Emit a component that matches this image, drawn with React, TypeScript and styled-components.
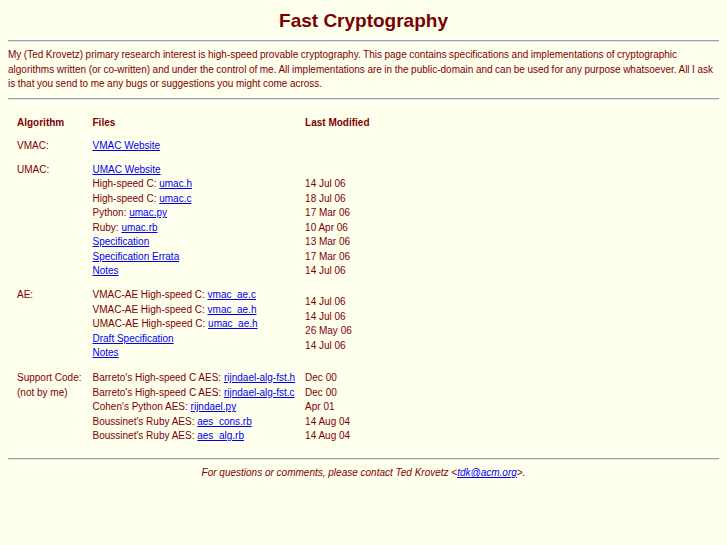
import styled, { createGlobalStyle } from "styled-components";

const GlobalStyle = createGlobalStyle`
  body {
    margin: 8px;
    background: #ffffee;
    color: #800000;
    font-family: "Liberation Sans", Arial, sans-serif;
  }
`;

const Page = styled.div`
  width: 100%;
`;

const Title = styled.h1`
  margin: 0;
  padding-top: 1px;
  font-size: 19px;
  line-height: 23px;
  font-weight: bold;
  text-align: center;
  color: #7a0000;
`;

const Rule = styled.hr<{ $top?: number; $bottom?: number }>`
  margin: ${(p) => p.$top ?? 8}px 0 ${(p) => p.$bottom ?? 6}px;
  border: 0;
  border-top: 1px solid #a0a0a8;
  border-bottom: 1px solid #e4e4e4;
  height: 0;
`;

const Intro = styled.p`
  margin: 0;
  font-size: 10px;
  line-height: 14.5px;
  word-spacing: -0.25px;
`;

const Table = styled.table`
  margin-top: 16px;
  margin-left: 1px;
  border-collapse: collapse;
  font-size: 10px;
  line-height: 14.5px;
`;

const Group = styled.tbody``;

const TR = styled.tr``;

const TH = styled.th<{ $right?: number }>`
  text-align: left;
  font-weight: bold;
  padding: 0 ${(p) => p.$right ?? 8}px 8.5px 8px;
  vertical-align: top;
`;

const TD = styled.td<{ $middle?: boolean; $gap?: number }>`
  padding: 0 8px ${(p) => p.$gap ?? 9.5}px 8px;
  vertical-align: ${(p) => (p.$middle ? "middle" : "top")};
`;

const AlgCell = styled(TD)`
  padding-right: 3px;
`;

const FilesCell = styled(TD)`
  padding-right: 2px;
`;

const Line = styled.div`
  white-space: nowrap;
  min-height: 14.5px;
`;

const Link = styled.a`
  color: #0000ee;
  text-decoration: underline;
`;

const Footer = styled.p`
  margin: 0;
  font-size: 10px;
  line-height: 14.5px;
  font-style: italic;
  text-align: center;
`;

type FileLine = { label?: string; link: string };

const umacFiles: FileLine[] = [
  { link: "UMAC Website" },
  { label: "High-speed C: ", link: "umac.h" },
  { label: "High-speed C: ", link: "umac.c" },
  { label: "Python: ", link: "umac.py" },
  { label: "Ruby: ", link: "umac.rb" },
  { link: "Specification" },
  { link: "Specification Errata" },
  { link: "Notes" },
];
const umacDates = ["", "14 Jul 06", "18 Jul 06", "17 Mar 06", "10 Apr 06", "13 Mar 06", "17 Mar 06", "14 Jul 06"];

const aeFiles: FileLine[] = [
  { label: "VMAC-AE High-speed C: ", link: "vmac_ae.c" },
  { label: "VMAC-AE High-speed C: ", link: "vmac_ae.h" },
  { label: "UMAC-AE High-speed C: ", link: "umac_ae.h" },
  { link: "Draft Specification" },
  { link: "Notes" },
];
const aeDates = ["14 Jul 06", "14 Jul 06", "26 May 06", "14 Jul 06"];

const supportFiles: FileLine[] = [
  { label: "Barreto's High-speed C AES: ", link: "rijndael-alg-fst.h" },
  { label: "Barreto's High-speed C AES: ", link: "rijndael-alg-fst.c" },
  { label: "Cohen's Python AES: ", link: "rijndael.py" },
  { label: "Boussinet's Ruby AES: ", link: "aes_cons.rb" },
  { label: "Boussinet's Ruby AES: ", link: "aes_alg.rb" },
];
const supportDates = ["Dec 00", "Dec 00", "Apr 01", "14 Aug 04", "14 Aug 04"];

function Files({ items }: { items: FileLine[] }) {
  return (
    <>
      {items.map((f, i) => (
        <Line key={i}>
          {f.label}
          <Link href="#">{f.link}</Link>
        </Line>
      ))}
    </>
  );
}

function Dates({ items }: { items: string[] }) {
  return (
    <>
      {items.map((d, i) => (
        <Line key={i}>{d}</Line>
      ))}
    </>
  );
}

export default function App() {
  return (
    <Page>
      <GlobalStyle />
      <Title>Fast Cryptography</Title>
      <Rule />
      <Intro>
        My (Ted Krovetz) primary research interest is high-speed provable cryptography. This page
        contains specifications and implementations of cryptographic algorithms written (or
        co-written) and under the control of me. All implementations are in the public-domain and
        can be used for any purpose whatsoever. All I ask is that you send to me any bugs or
        suggestions you might come across.
      </Intro>
      <Rule $top={6} />
      <Table>
        <Group>
          <TR>
            <TH $right={3}>Algorithm</TH>
            <TH $right={2}>Files</TH>
            <TH>Last Modified</TH>
          </TR>
        </Group>
        <Group>
          <TR>
            <AlgCell>VMAC:</AlgCell>
            <FilesCell>
              <Link href="#">VMAC Website</Link>
            </FilesCell>
            <TD />
          </TR>
        </Group>
        <Group>
          <TR>
            <AlgCell>UMAC:</AlgCell>
            <FilesCell>
              <Files items={umacFiles} />
            </FilesCell>
            <TD>
              <Dates items={umacDates} />
            </TD>
          </TR>
        </Group>
        <Group>
          <TR>
            <AlgCell $gap={10.5}>AE:</AlgCell>
            <FilesCell $gap={10.5}>
              <Files items={aeFiles} />
            </FilesCell>
            <TD $middle $gap={10.5}>
              <Dates items={aeDates} />
            </TD>
          </TR>
        </Group>
        <Group>
          <TR>
            <AlgCell>
              <Line>Support Code:</Line>
              <Line>(not by me)</Line>
            </AlgCell>
            <FilesCell>
              <Files items={supportFiles} />
            </FilesCell>
            <TD>
              <Dates items={supportDates} />
            </TD>
          </TR>
        </Group>
      </Table>
      <Rule $top={5} />
      <Footer>
        For questions or comments, please contact Ted Krovetz &lt;
        <Link href="#">tdk@acm.org</Link>&gt;.
      </Footer>
    </Page>
  );
}
